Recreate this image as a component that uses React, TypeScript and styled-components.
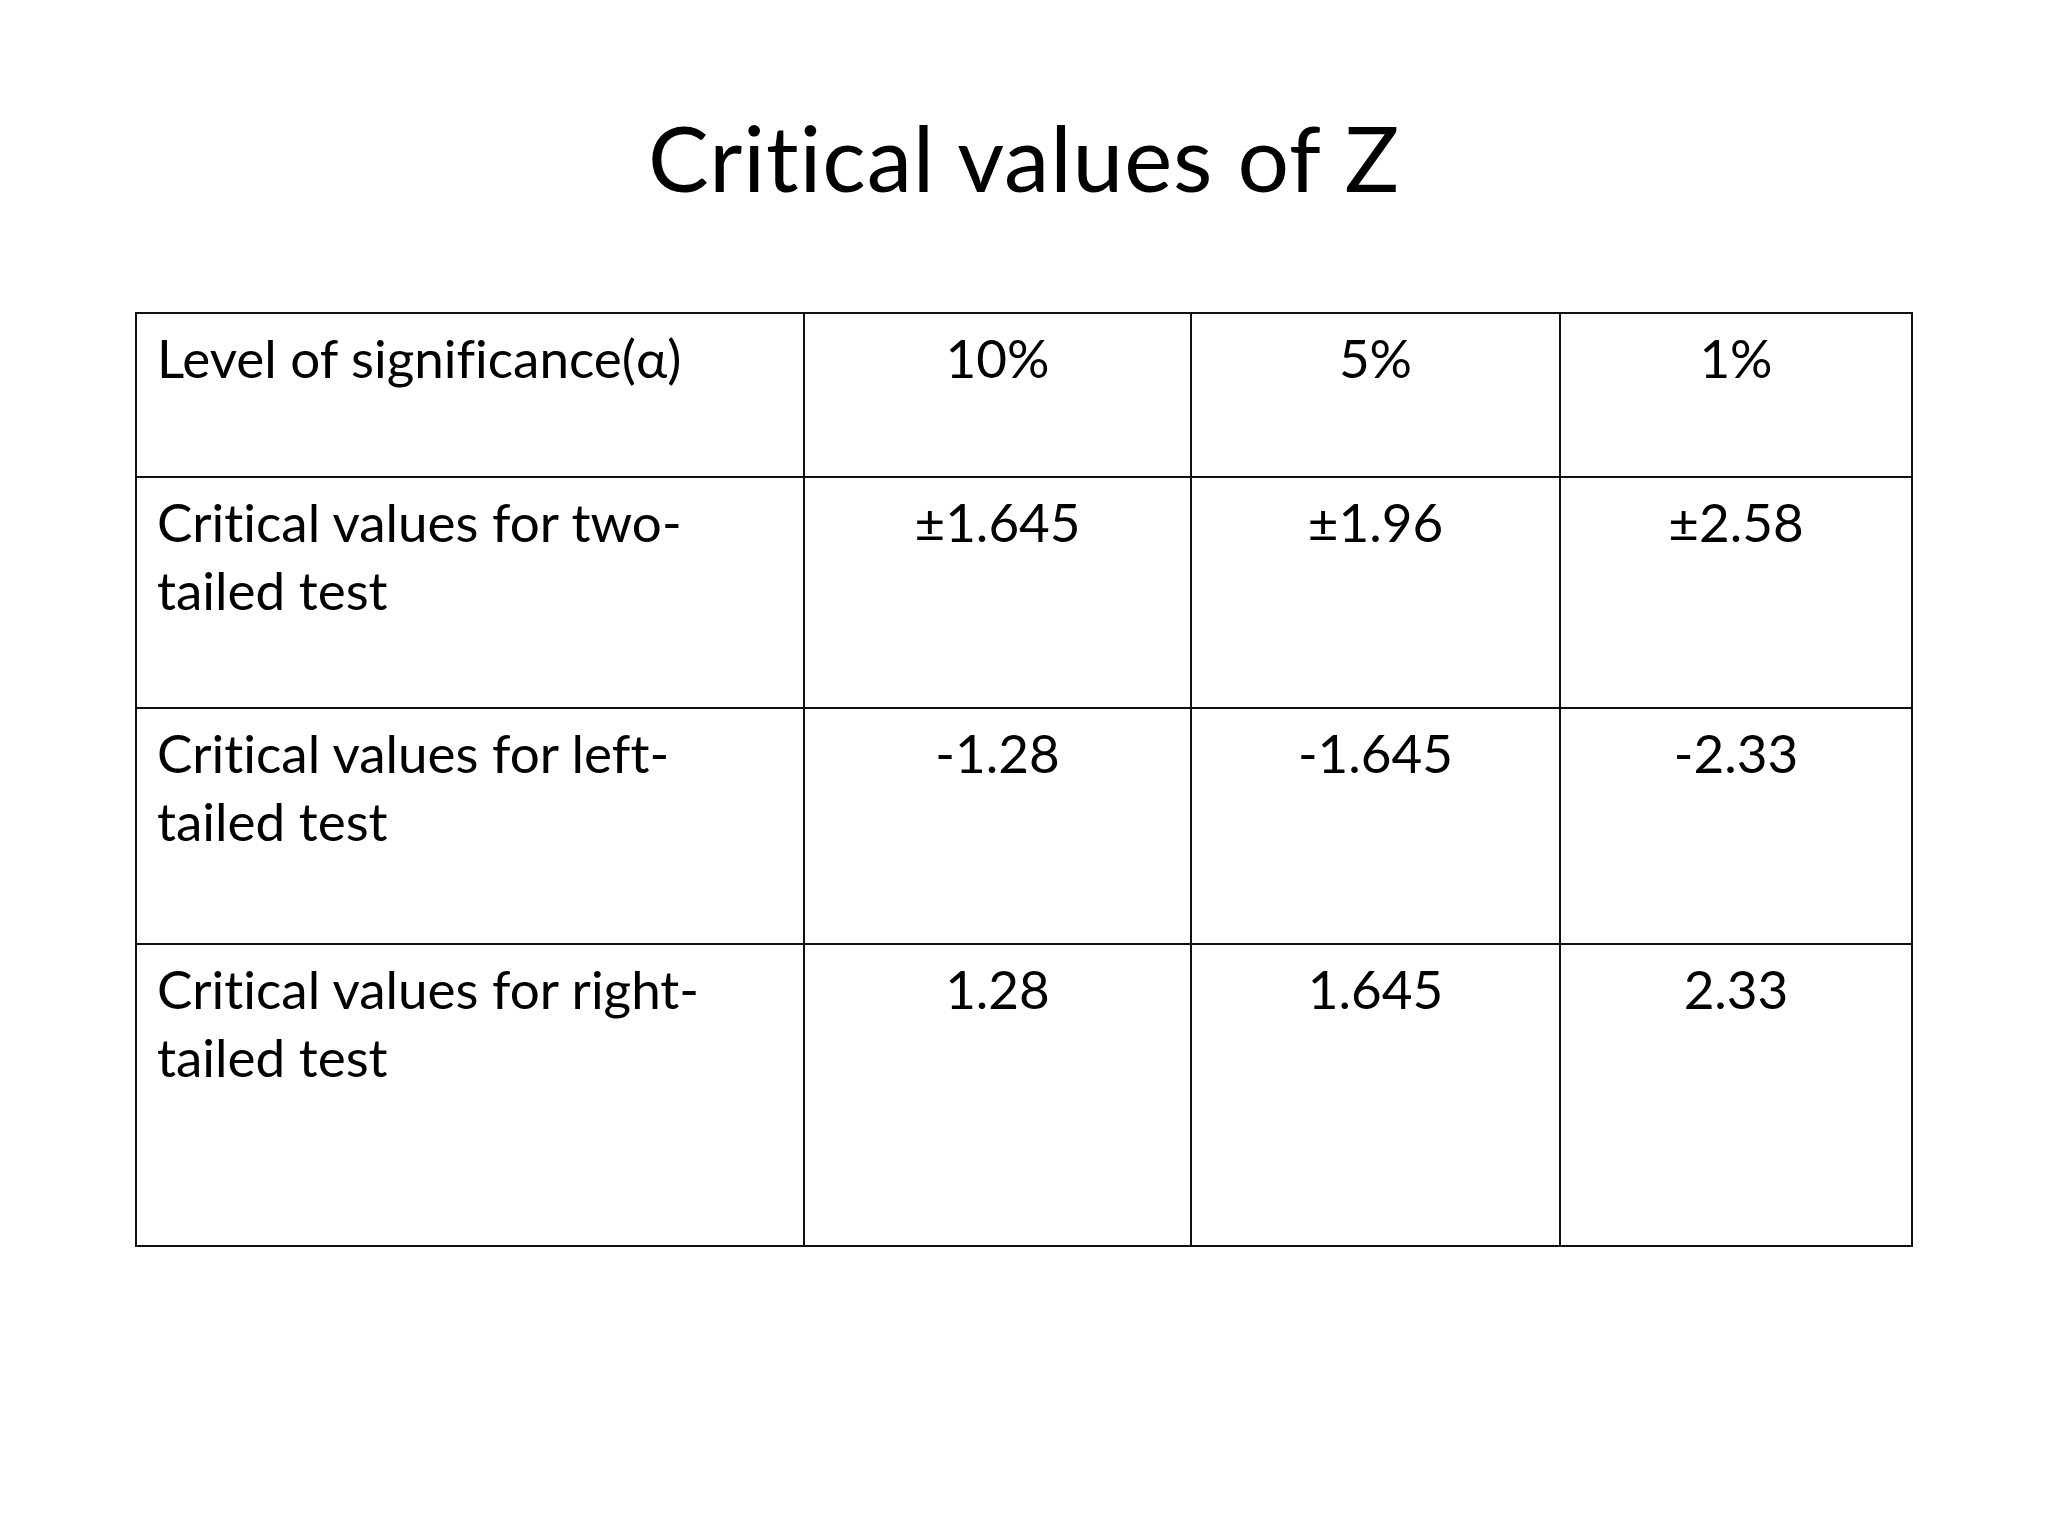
import React from "react";
import styled, { createGlobalStyle } from "styled-components";

const Global = createGlobalStyle`
  html, body { margin: 0; padding: 0; background: #ffffff; }
  body {
    font-family: Lato, "Open Sans", sans-serif;
    color: #000;
    font-variant-ligatures: none;
    font-feature-settings: "liga" 0, "clig" 0, "dlig" 0;
  }
`;

const Slide = styled.div`
  width: 2048px;
  height: 1536px;
  background: #ffffff;
  display: flex;
  flex-direction: column;
  align-items: flex-start;
  box-sizing: border-box;
  padding-top: 102px;
`;

const Title = styled.h1`
  margin: 0;
  width: 100%;
  text-align: center;
  font-family: Lato, sans-serif;
  font-weight: 400;
  font-size: 91px;
  line-height: 110px;
  height: 110px;
  letter-spacing: 0.9px;
  font-variant-ligatures: none;
`;

const Table = styled.table`
  margin-top: 100px;
  margin-left: 135px;
  width: 1778px;
  border-collapse: collapse;
  table-layout: fixed;
  font-family: Lato, sans-serif;
  font-size: 53px;
  line-height: 68px;
  font-variant-ligatures: none;
`;

const Col = styled.col<{ $w: number }>`
  width: ${(p) => p.$w}px;
`;

const Row = styled.tr<{ $h: number }>`
  height: ${(p) => p.$h}px;
`;

const Cell = styled.td<{ $label?: boolean }>`
  border: 2px solid #111;
  vertical-align: top;
  padding: 10px 0 0 ${(p) => (p.$label ? "20px" : "0")};
  text-align: ${(p) => (p.$label ? "left" : "center")};
  letter-spacing: 0;
`;

const widths = [668, 387, 369, 352];

const rows = [
  { label: ["Level of significance(α)"], vals: ["10%", "5%", "1%"], h: 164 },
  { label: ["Critical values for two-", "tailed test"], vals: ["±1.645", "±1.96", "±2.58"], h: 231 },
  { label: ["Critical values for left-", "tailed test"], vals: ["-1.28", "-1.645", "-2.33"], h: 236 },
  { label: ["Critical values for right-", "tailed test"], vals: ["1.28", "1.645", "2.33"], h: 302 },
];

export default function App() {
  return (
    <>
      <Global />
      <Slide>
        <Title>Critical values of Z</Title>
        <Table>
          <colgroup>
            {widths.map((w, i) => (
              <Col key={i} $w={w} />
            ))}
          </colgroup>
          <tbody>
            {rows.map((r, i) => (
              <Row key={i} $h={r.h}>
                <Cell $label>
                  {r.label.map((l, j) => (
                    <React.Fragment key={j}>
                      {j > 0 && <br />}
                      {l}
                    </React.Fragment>
                  ))}
                </Cell>
                {r.vals.map((v, j) => (
                  <Cell key={j}>{v}</Cell>
                ))}
              </Row>
            ))}
          </tbody>
        </Table>
      </Slide>
    </>
  );
}
